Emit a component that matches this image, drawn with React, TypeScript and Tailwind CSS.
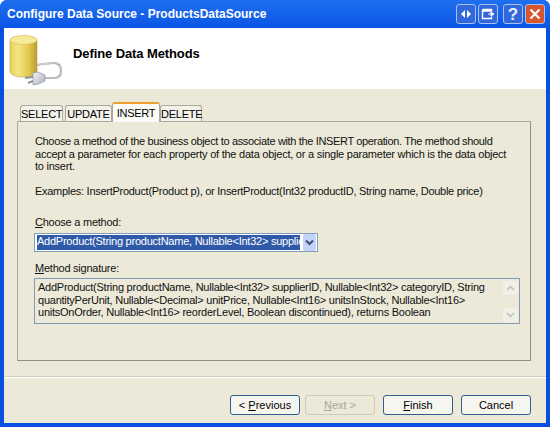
const uiFont = "font-['Liberation_Sans',sans-serif]";

function DataIcon() {
  return (
    <svg width="56" height="56" viewBox="9 33 56 56" className="block">
      <defs>
        <linearGradient id="can" x1="0" x2="1" y1="0" y2="0">
          <stop offset="0" stopColor="#e8cf55" />
          <stop offset="0.3" stopColor="#f4e684" />
          <stop offset="0.7" stopColor="#e3c74e" />
          <stop offset="1" stopColor="#b99c30" />
        </linearGradient>
        <linearGradient id="plug" x1="0" x2="1" y1="0" y2="1">
          <stop offset="0" stopColor="#f4f5f8" />
          <stop offset="1" stopColor="#a9aeb9" />
        </linearGradient>
      </defs>
      <path d="M10 40 v31 c0 4 6 6 13.500 6 s13.500 -2 13.500 -6 V40z" fill="url(#can)" stroke="#c0a43c" strokeWidth="0.6" />
      <ellipse cx="23.500" cy="40" rx="13.500" ry="4.500" fill="#f5ea98" stroke="#d0b64c" strokeWidth="0.6" />
      <path d="M37 65 c6 -1 12 -2 17 -2 c5 0 7 3 7 8 c0 5 -3 7 -7 7 h-9" fill="none" stroke="#a2a2a2" strokeWidth="2.2" />
      <path d="M37 65 c6 -1 12 -2 17 -2 c5 0 7 3 7 8 c0 5 -3 7 -7 7 h-9" fill="none" stroke="#e6e6e6" strokeWidth="0.8" />
      <path d="M33 73 l5 -1 l7 3 v6 l-7 3 l-5 1z" fill="url(#plug)" stroke="#8d93a0" strokeWidth="0.7" />
      <path d="M33 77 l-8 1 M33 81 l-5 2" stroke="#8d93a0" strokeWidth="2" />
    </svg>
  );
}

function TitleButton({ red, children }: { red?: boolean; children: React.ReactNode }) {
  return (
    <div
      className={`flex h-[20px] w-[20px] items-center justify-center rounded-[3px] border border-[#a9c0f0] ${
        red ? 'bg-[#d8562e]' : 'bg-[#3268dc]'
      }`}
    >
      {children}
    </div>
  );
}

function Tab({ label, active, width }: { label: string; active?: boolean; width: string }) {
  return (
    <div
      className={`${width} text-center text-[11px] tracking-[-0.24px] text-black ${
        active
          ? 'relative z-10 h-[20px] rounded-t-[3px] border-x border-t-2 border-x-[#a9a99c] border-t-[#f0a030] bg-[#fbfbf8] pt-[2px] leading-[14px]'
          : 'h-[17px] rounded-t-[3px] border-x border-t border-[#a9a99c] bg-[#f3f2ea] leading-[17px]'
      }`}
    >
      {label}
    </div>
  );
}

function WizardButton({ children, disabled }: { children: React.ReactNode; disabled?: boolean }) {
  return (
    <div
      className={`flex h-[20px] w-[70px] items-center justify-center rounded-[3px] border text-[11px] ${
        disabled
          ? 'border-[#d0ccb8] bg-[#ece9d8] text-[#a8a798]'
          : 'border-[#2f5f90] bg-[#f6f6f1] text-black'
      }`}
    >
      {children}
    </div>
  );
}

export default function App() {
  return (
    <div className={`flex h-[427px] w-[550px] flex-col overflow-hidden rounded-t-[7px] bg-[#0a50e0] ${uiFont}`}>
      <div className="flex h-[28px] shrink-0 items-center justify-between bg-gradient-to-b from-[#1f6ff0] to-[#0a55e4] pl-[7px] pr-[5px]">
        <span className="text-[12px] font-bold text-white">Configure Data Source - ProductsDataSource</span>
        <div className="flex items-center gap-[2px]">
          <TitleButton>
            <svg width="12" height="10" viewBox="0 0 12 10">
              <path d="M5 1 L1 5 L5 9z M7 1 L11 5 L7 9z" fill="#fff" />
            </svg>
          </TitleButton>
          <TitleButton>
            <svg width="14" height="12" viewBox="0 0 14 12">
              <path d="M1.500 1.500 h9 v2 M1.500 1.500 v9 h9 v-2 M1.500 3 h9" fill="none" stroke="#fff" strokeWidth="1.4" />
              <path d="M7 6 h4 M10 4 l3 2 l-3 2z" fill="#fff" stroke="#fff" strokeWidth="1" />
            </svg>
          </TitleButton>
          <div className="w-[1px]" />
          <TitleButton>
            <span className="text-[17px] font-bold leading-none text-[#e8eefc]">?</span>
          </TitleButton>
          <TitleButton red>
            <svg width="12" height="12" viewBox="0 0 12 12">
              <path d="M1.500 1.500 L10.500 10.500 M10.500 1.500 L1.500 10.500" stroke="#fff" strokeWidth="2.2" />
            </svg>
          </TitleButton>
        </div>
      </div>

      <div className="mx-[4px] mb-[4px] flex flex-1 flex-col bg-[#ece9d8]">
        <div className="flex h-[61px] shrink-0 bg-white">
          <div className="pl-[5px] pt-[5px]">
            <DataIcon />
          </div>
          <span className="ml-[8px] mt-[16px] text-[13px] font-bold tracking-[-0.1px] text-black">Define Data Methods</span>
        </div>

        <div className="ml-[13px] mr-[15px] mt-[13px] flex flex-col">
          <div className="flex h-[20px] items-end pl-[3px]">
            <Tab label="SELECT" width="w-[43px]" />
            <div className="w-[2px]" />
            <Tab label="UPDATE" width="w-[47px]" />
            <Tab label="INSERT" active width="w-[48px]" />
            <Tab label="DELETE" width="w-[42px]" />
          </div>
          <div className="-mt-px h-[240px] border border-[#a9a99c] border-b-[#8f8f84] border-r-[#8f8f84] pl-[17px] pr-[12px] pt-[13px] text-[11px] leading-[12.5px] tracking-[-0.24px] text-[#111]">
            <p className="whitespace-nowrap">
              <span className="tracking-[-0.35px]">
                Choose a method of the business object to associate with the INSERT operation. The method should
              </span>
              <br />
              accept a parameter for each property of the data object, or a single parameter which is the data object
              <br />
              to insert.
            </p>
            <p className="mt-[12px] whitespace-nowrap tracking-[-0.28px]">
              Examples: InsertProduct(Product p), or InsertProduct(Int32 productID, String name, Double price)
            </p>
            <p className="mt-[19px]">
              <span className="underline">C</span>hoose a method:
            </p>
            <div className="-ml-px mt-[4px] flex h-[19px] w-[284px] items-center border border-[#7f9db9] bg-white pl-[2px] pr-px">
              <span className="h-[15px] w-[263px] whitespace-nowrap bg-[#2f5aa8] text-white">
                AddProduct(String productName, Nullable&lt;Int32&gt; supplie
              </span>
              <div className="ml-[3px] flex h-[17px] w-[15px] items-center justify-center rounded-[2px] bg-[#c3d3f8]">
                <svg width="9" height="7" viewBox="0 0 9 7">
                  <path d="M1 1.500 L4.500 5 L8 1.500" fill="none" stroke="#3a4f80" strokeWidth="2" />
                </svg>
              </div>
            </div>
            <p className="mt-[10px]">
              <span className="underline">M</span>ethod signature:
            </p>
            <div className="-ml-px mt-[4px] flex h-[46px] w-[486px] border border-[#7f9db9] pl-[3px] pt-[2px]">
              <p className="whitespace-nowrap">
                AddProduct(String productName, Nullable&lt;Int32&gt; supplierID, Nullable&lt;Int32&gt; categoryID, String
                <br />
                quantityPerUnit, Nullable&lt;Decimal&gt; unitPrice, Nullable&lt;Int16&gt; unitsInStock, Nullable&lt;Int16&gt;
                <br />
                unitsOnOrder, Nullable&lt;Int16&gt; reorderLevel, Boolean discontinued), returns Boolean
              </p>
              <div className="ml-auto mr-[1px] flex h-[41px] w-[15px] flex-col justify-between">
                <div className="flex h-[14px] items-center justify-center rounded-[2px] bg-[#f1f0e8]">
                  <svg width="9" height="6" viewBox="0 0 9 6">
                    <path d="M1 5 L4.500 1.500 L8 5" fill="none" stroke="#c4c3b8" strokeWidth="1.6" />
                  </svg>
                </div>
                <div className="flex h-[14px] items-center justify-center rounded-[2px] bg-[#f1f0e8]">
                  <svg width="9" height="6" viewBox="0 0 9 6">
                    <path d="M1 1 L4.500 4.500 L8 1" fill="none" stroke="#c4c3b8" strokeWidth="1.6" />
                  </svg>
                </div>
              </div>
            </div>
          </div>
        </div>

        <div className="mt-[15px] h-[2px] border-t border-[#d2cfbd] bg-white" />

        <div className="mr-[15px] mt-[17px] flex justify-end">
          <WizardButton>
            &lt;&nbsp;<span className="underline">P</span>revious
          </WizardButton>
          <div className="w-[5px]" />
          <WizardButton disabled>
            <span className="underline">N</span>ext &gt;
          </WizardButton>
          <div className="w-[8px]" />
          <WizardButton>
            <span className="underline">F</span>inish
          </WizardButton>
          <div className="w-[8px]" />
          <WizardButton>Cancel</WizardButton>
        </div>
      </div>
    </div>
  );
}
